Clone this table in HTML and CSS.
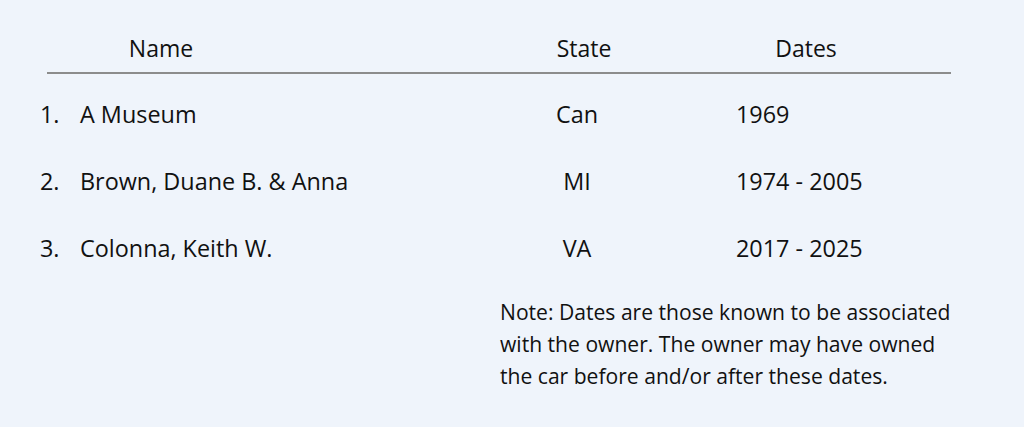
FILE: index.html
```html
<!DOCTYPE html>
<html lang="en">
<head>
<meta charset="utf-8">
<title>Owners</title>
<link rel="stylesheet" href="styles.css">
</head>
<body>
<div class="page">
  <div class="head">
    <div class="h-name">Name</div>
    <div></div>
    <div class="h-state">State</div>
    <div></div>
    <div class="h-dates">Dates</div>
  </div>
  <ol class="rows">
    <li class="row"><span class="num">1.</span><span class="name">A Museum</span><span class="state">Can</span><span></span><span class="dates">1969</span></li>
    <li class="row"><span class="num">2.</span><span class="name">Brown, Duane B. &amp; Anna</span><span class="state">MI</span><span></span><span class="dates">1974 - 2005</span></li>
    <li class="row"><span class="num">3.</span><span class="name">Colonna, Keith W.</span><span class="state">VA</span><span></span><span class="dates">2017 - 2025</span></li>
  </ol>
  <p class="note">Note: Dates are those known to be associated with the owner. The owner may have owned the car before and/or after these dates.</p>
</div>
</body>
</html>
```

FILE: styles.css
```css
html, body {
  margin: 0;
  padding: 0;
  background: #eff4fb;
}
body {
  font-family: "Open Sans", "Noto Sans", sans-serif;
  font-size: 23px;
  color: #111;
}
.page {
  width: 1024px;
  height: 427px;
  padding-top: 31px;
  box-sizing: border-box;
}
.head {
  margin-left: 47px;
  width: 904px;
  display: grid;
  grid-template-columns: 228px 249px 120px 102px 120px;
  border-bottom: 2px solid #8c8c8c;
  padding-bottom: 7px;
  line-height: 34px;
}
.head > div { text-align: center; }
.rows {
  list-style: none;
  margin: 0;
  padding: 0;
  padding-left: 40px;
  padding-top: 23px;
  font-size: 23.4px;
}
.row {
  display: grid;
  grid-template-columns: 40px 457px 80px 119px 1fr;
  line-height: 34px;
  margin-bottom: 33px;
}
.row:last-child { margin-bottom: 31px; }
.state { text-align: center; }
.note {
  margin: 0;
  margin-left: 500px;
  width: 456px;
  font-size: 21.1px;
  line-height: 32px;
}
```
